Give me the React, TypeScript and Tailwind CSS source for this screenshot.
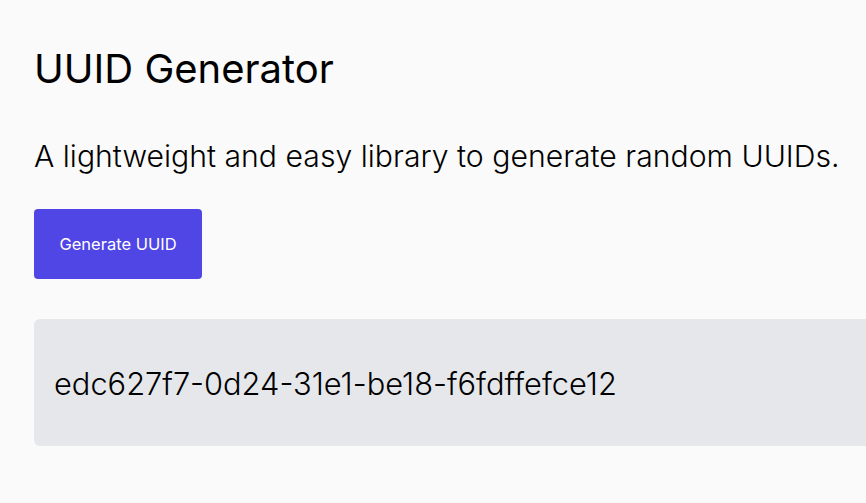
export default function App() {
  return (
    <div
      className="min-h-screen w-full overflow-hidden bg-[#fafafa] text-black"
      style={{ fontFamily: "Inter, 'Noto Sans', sans-serif" }}
    >
      <div className="w-[900px] pl-[34px] pt-[45px]">
        <h1 className="text-[40px] leading-[48px] font-normal">UUID Generator</h1>
        <p className="mt-[45px] text-[30.2px] leading-[36px] font-light">
          A lightweight and easy library to generate random UUIDs.
        </p>
        <button className="mt-[35px] flex h-[70px] w-[168px] items-center justify-center rounded bg-[#4f46e5] text-[16.5px] text-white">
          Generate UUID
        </button>
        <div className="mt-[40px] flex h-[127px] items-center rounded-md bg-[#e5e7eb] pl-[20px] pt-[3px]">
          <span className="text-[30.8px] leading-[36px] font-light">edc627f7-0d24-31e1-be18-f6fdffefce12</span>
        </div>
      </div>
    </div>
  );
}
